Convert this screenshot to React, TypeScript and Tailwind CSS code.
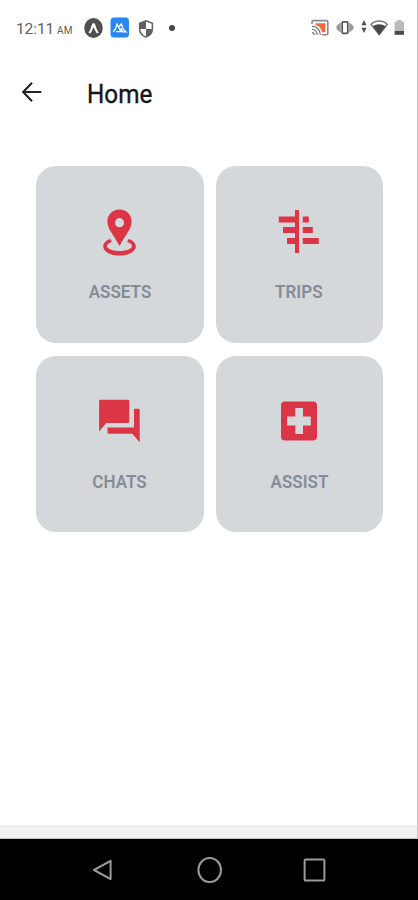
import type { ReactNode } from "react";

function AssetsIcon() {
    return (
        <svg width="48" height="52" viewBox="0 0 48 52" fill="#dc3545">
            <path fillRule="evenodd" d="M23.5 3.5C16.6 3.5 11.4 8.7 11.4 15.4C11.4 19.2 12.9 22.6 15.2 26.3C17.8 30.6 20.8 34.8 23.5 40C26.2 34.8 29.2 30.6 31.8 26.3C34.1 22.6 35.6 19.2 35.6 15.4C35.6 8.7 30.4 3.5 23.5 3.5ZM23.5 12.1A4.5 4.6 0 1 1 23.5 21.3A4.5 4.6 0 1 1 23.5 12.1Z" />
            <path d="M14.2 33C10 34.4 7.2 37 7.2 40.2C7.2 45.6 14.3 49.6 23.5 49.6C32.7 49.6 39.8 45.6 39.8 40.2C39.8 37 37 34.4 32.8 33L31 36C34.1 36.9 36 38.4 36 40C36 42.7 30.6 45 23.5 45C16.4 45 11 42.7 11 40C11 38.4 12.9 36.9 16 36Z" />
        </svg>
    );
}

function TripsIcon() {
    return (
        <svg width="48" height="52" viewBox="0 0 48 52" fill="#dc3545">
            <path d="M20 4H24V47H20V38H12V32H20V27H8V21H20V16.4H3.8V10.4H20Z" />
            <path d="M27.8 10.4H33.8V16.4H27.8ZM27.8 21H37.8V27H27.8ZM27.8 32H43.8V38H27.8Z" />
        </svg>
    );
}

function ChatsIcon() {
    return (
        <svg width="48" height="52" viewBox="0 0 48 52" fill="#dc3545">
            <path d="M4.5 3.8H32Q33.3 3.8 33.3 5.2V25.5Q33.3 26.9 32 26.9H10.2L3.1 35.5V5.2Q3.1 3.8 4.5 3.8Z" />
            <path d="M38 12.7H42.4Q43.7 12.7 43.7 14.1V46.3L36.3 37.8H12.8Q11.5 37.8 11.5 36.4V31.5H38Z" />
        </svg>
    );
}

function AssistIcon() {
    return (
        <svg width="48" height="52" viewBox="0 0 48 52" fill="#dc3545">
            <path fillRule="evenodd" d="M9.8 5.6H38Q42 5.6 42 9.6V40.6Q42 44.6 38 44.6H9.8Q6 44.6 6 40.6V9.6Q6 5.6 9.8 5.6ZM20.3 12V20.6H12.1V29.6H20.3V38H28V29.6H35.8V20.6H28V12Z" />
        </svg>
    );
}

function Card({ label, icon }: { label: string; icon: ReactNode }) {
    return (
        <button className="flex flex-col items-center rounded-[20px] bg-[#d4d8db] pt-10">
            {icon}
            <span className="mt-[22px] block scale-x-[0.92] text-[18.5px] leading-6 font-semibold text-[#848d97]">{label}</span>
        </button>
    );
}

function StatusBar() {
    return (
        <div className="flex h-14 items-center justify-between pr-3 pl-4 text-[#606060]">
            <div className="flex items-center">
                <div className="flex w-[68px] items-baseline gap-[3px] pt-[3px] whitespace-nowrap">
                    <span className="text-[15.5px] tracking-[-0.1px]">12:11</span>
                    <span className="text-[10px]">AM</span>
                </div>
                <svg width="20" height="22" viewBox="0 0 20 22">
                    <ellipse cx="9.5" cy="11" rx="9.3" ry="9.9" fill="#505050" />
                    <path d="M4.5 15.5C6.5 13.5 7.5 8 8.5 6.5Q9.5 5.4 10.5 6.5C11.8 8.2 12.8 13.5 14.8 15.5L13 16.5C11.2 14.5 10.5 11.6 9.6 10.5C8.6 11.6 8 14.5 6.3 16.5Z" fill="#fff" />
                </svg>
                <svg className="ml-[6px]" width="20" height="22" viewBox="0 0 20 22">
                    <rect x="0.5" y="0.5" width="18.5" height="20" rx="3.5" fill="#2b86f3" />
                    <path d="M3.2 14.8L5.3 12.2L7 7.2L11 14.6H6M9.2 9.5L11.4 6.9L13.2 12.2L16 14.8H12.6L10.8 11" fill="none" stroke="#fff" strokeWidth="1.3" />
                </svg>
                <svg className="mt-px ml-2" width="16" height="20" viewBox="0 0 16 20">
                    <path d="M8 1.7L14.4 4.2V9.4C14.4 13.5 11.8 16.7 8 18.1C4.2 16.7 1.6 13.5 1.6 9.4V4.2Z" fill="#fff" stroke="#606060" strokeWidth="1.5" />
                    <path d="M8 2V10H2C1.8 8.5 1.8 6 1.8 4.4ZM8 10H14.2C13.8 14 11.5 16.8 8 18Z" fill="#606060" />
                </svg>
                <div className="ml-[15px] size-[5.5px] rounded-full bg-[#454545]" />
            </div>
            <div className="flex items-center">
                <svg width="18" height="18" viewBox="0 0 18 18" fill="none">
                    <path d="M1 5V2.8Q1 1.6 2.2 1.6H15.6Q16.8 1.6 16.8 2.8V14.6Q16.8 15.8 15.6 15.8H11" stroke="#8a8a8a" strokeWidth="1.6" />
                    <path d="M4.5 4.2H14.5V13.3H11C10 9 8 6.6 4.5 5.8Z" fill="#f2693a" />
                    <path d="M1 7.2C6 7.2 9.3 11 9.3 16M1 10.4C4 10.4 6.1 12.8 6.1 16M1 13.6C2.5 13.6 3.2 14.7 3.2 16" stroke="#777" strokeWidth="1.3" />
                </svg>
                <svg className="ml-[7px]" width="18" height="18" viewBox="0 0 18 18" fill="none">
                    <path d="M4.8 3.2V13.8L.5 10V7ZM13.2 3.2V13.8L17.5 10V7Z" fill="#999" />
                    <rect x="6.2" y="2.9" width="5.6" height="11.4" rx="1" fill="#fff" stroke="#555" strokeWidth="1.7" />
                </svg>
                <svg className="ml-[7px]" width="6" height="18" viewBox="0 0 6 18" fill="#505050">
                    <path d="M3 1L5.6 6.3H.4ZM3 14L.4 8.7H5.6Z" />
                </svg>
                <svg className="ml-[3px]" width="18" height="18" viewBox="0 0 18 18">
                    <path d="M1 5.4C5.6 .7 12.8 .7 17.4 5.4L9.2 15.6Z" fill="#fff" stroke="#777" strokeWidth="1.5" />
                    <path d="M2.7 7.3C6.6 4.6 11.8 4.6 15.7 7.3L9.2 16Z" fill="#484848" />
                </svg>
                <svg className="ml-[6px]" width="11" height="18" viewBox="0 0 11 18">
                    <path d="M3 .9H7.5V2.5H9Q10 2.5 10 3.5V12H.6V3.5Q.6 2.5 1.6 2.5H3Z" fill="#bbb" />
                    <path d="M.6 12H10V15.8H.6Z" fill="#484848" />
                </svg>
            </div>
        </div>
    );
}

export default function App() {
    return (
        <div className="flex h-[900px] w-[418px] flex-col bg-white font-[Roboto,sans-serif]">
            <div className="flex flex-1 flex-col border-r border-[#c9c9c9]">
                <StatusBar />
                <header className="ml-4 flex h-[77px] items-start border-b border-[#fcfcfc] pt-5">
                    <svg className="mt-1.5 ml-[5px]" width="21" height="20" viewBox="0 0 21 20" fill="none" stroke="#222" strokeWidth="2.1">
                        <path d="M20.3 10H2.5M11 .8L2.2 10L11 19.2" />
                    </svg>
                    <h1 className="mt-px ml-[45px] origin-left scale-x-[0.97] text-[25px] leading-9 font-normal text-[#161616] [-webkit-text-stroke:0.35px_#161616]">Home</h1>
                </header>
                <main className="grid auto-rows-[176.5px] grid-cols-[167.5px_167.5px] gap-x-3 gap-y-[13px] pt-[33px] pl-9">
                    <Card label="ASSETS" icon={<AssetsIcon />} />
                    <Card label="TRIPS" icon={<TripsIcon />} />
                    <Card label="CHATS" icon={<ChatsIcon />} />
                    <Card label="ASSIST" icon={<AssistIcon />} />
                </main>
                <div className="mt-auto h-[14px] border-b border-[#bdbdbd] bg-[#f0f0f0]" />
            </div>
            {/* Android navigation */}
            <nav className="flex h-[61px] items-center justify-center gap-[80px] bg-black">
                <svg width="24" height="26" viewBox="0 0 24 26" fill="none" stroke="#9b9b9b" strokeWidth="2">
                    <path d="M2 13L18.6 3.9V22.1Z" strokeLinejoin="round" />
                </svg>
                <svg width="26" height="28" viewBox="0 0 26 28" fill="none" stroke="#9b9b9b" strokeWidth="2">
                    <ellipse cx="13.7" cy="14" rx="11.3" ry="12.1" />
                </svg>
                <svg width="24" height="26" viewBox="0 0 24 26" fill="none" stroke="#9b9b9b" strokeWidth="2">
                    <rect x="2.6" y="2.4" width="19.8" height="21.2" rx="1.2" />
                </svg>
            </nav>
        </div>
    );
}
